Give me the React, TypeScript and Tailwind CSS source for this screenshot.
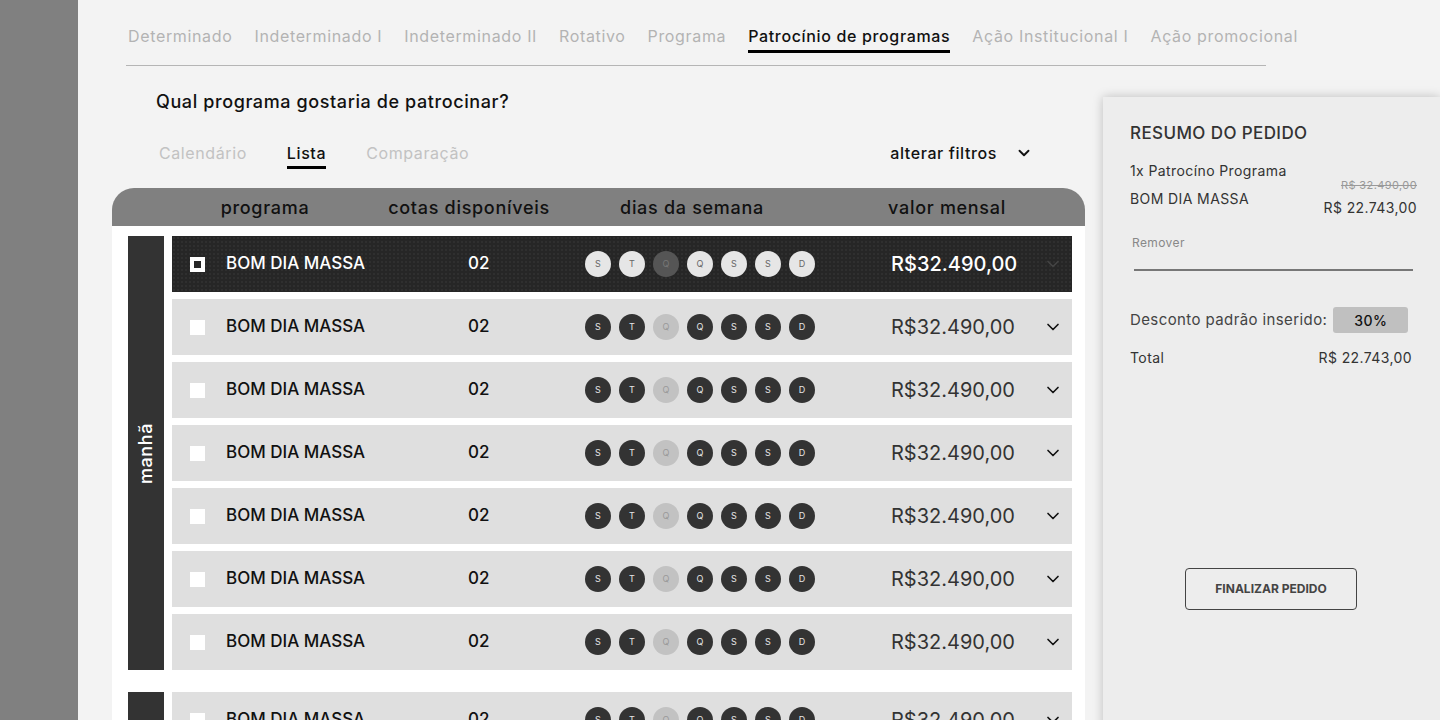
import { ChevronDown } from "lucide-react";

const tabs = [
  "Determinado",
  "Indeterminado I",
  "Indeterminado II",
  "Rotativo",
  "Programa",
  "Patrocínio de programas",
  "Ação Institucional I",
  "Ação promocional",
];

const days = ["S", "T", "Q", "Q", "S", "S", "D"];

type RowProps = { active?: boolean };

const ProgramRow = ({ active }: RowProps) => {
  return (
    <div
      className={`flex items-center h-[56px] pl-[18px] ${
        active
          ? "bg-[#262626] bg-[radial-gradient(circle,#2f2f2f_1px,transparent_1px)] bg-[length:4px_4px] text-white"
          : "bg-[#dfdfdf] text-[#111]"
      }`}
    >
      {/* checkbox */}
      <div
        className={`w-[15px] h-[15px] shrink-0 ${
          active ? "border-[4px] border-white bg-[#262626]" : "bg-white"
        }`}
      />
      <div className="ml-[21px] w-[242px] text-[17px] font-medium">BOM DIA MASSA</div>
      <div className="w-[117px] text-[17px] font-medium">02</div>

      {/* dias */}
      <div className="flex gap-[8px]">
        {days.map((d, i) => {
          const off = i === 2;
          let cls = "";
          if (active) cls = off ? "bg-[#555] text-[#777]" : "bg-[#e6e6e6] text-[#666]";
          else cls = off ? "bg-[#c2c2c2] text-[#999]" : "bg-[#333] text-[#e6e6e6]";
          return (
            <div
              key={i}
              className={`w-[26px] h-[26px] rounded-full flex items-center justify-center text-[9px] ${cls}`}
            >
              {d}
            </div>
          );
        })}
      </div>

      <div
        className={`ml-[76px] w-[155px] text-[20px] ${
          active ? "text-white font-medium" : "text-[#333]"
        }`}
      >
        R$32.490,00
      </div>
      <ChevronDown
        size={20}
        strokeWidth={2}
        className={`-ml-[3px] ${active ? "text-[#444]" : "text-[#111]"}`}
      />
    </div>
  );
};

export default function App() {
  return (
    <div className="flex h-[720px] w-[1440px] overflow-hidden bg-[#f3f3f3] font-['Inter','Noto_Sans',sans-serif]">
      {/* sidebar */}
      <div className="w-[78px] shrink-0 bg-[#808080]" />

      <div className="flex-1 flex flex-col min-w-0">
        {/* top tabs */}
        <div className="pl-[48px] pt-[24px]">
          <div className="w-[1140px] border-b border-[#b5b5b5] flex gap-[22px] pl-[2px] h-[42px]">
            {tabs.map((t) => {
              const on = t === "Patrocínio de programas";
              return (
                <div key={t} className="flex flex-col">
                  <span
                    className={`text-[16px] leading-[24px] tracking-[0.65px] whitespace-nowrap ${
                      on ? "text-[#111] font-medium" : "text-[#b3b3b3]"
                    }`}
                  >
                    {t}
                  </span>
                  {on && <div className="h-[3px] bg-black mt-[2px]" />}
                </div>
              );
            })}
          </div>
        </div>

        <div className="flex">
          {/* left column */}
          <div className="ml-[34px] w-[973px] shrink-0">
            <div className="pl-[44px] pt-[24px] text-[18px] font-medium tracking-[0.6px] text-[#111] leading-[24px]">
              Qual programa gostaria de patrocinar?
            </div>

            <div className="flex items-start pl-[47px] pt-[27px] h-[74px] tracking-[0.6px]">
              <span className="text-[16px] leading-[24px] text-[#c2c2c2]">Calendário</span>
              <div className="ml-[40px] flex flex-col">
                <span className="text-[16px] leading-[24px] text-[#111] font-medium">Lista</span>
                <div className="h-[3px] bg-black mt-[1px]" />
              </div>
              <span className="ml-[40px] text-[16px] leading-[24px] text-[#c2c2c2]">Comparação</span>
              <div className="ml-auto mr-[52px] flex items-center gap-[18px]">
                <span className="text-[16px] leading-[24px] text-[#111] font-medium">alterar filtros</span>
                <ChevronDown size={18} strokeWidth={2.5} className="text-[#111]" />
              </div>
            </div>

            {/* table */}
            <div className="rounded-t-[22px] bg-[#808080] h-[38px] flex items-center pl-[60px] text-[18px] tracking-[0.7px] text-[#111] font-medium">
              <div className="w-[186px] text-center">programa</div>
              <div className="ml-[11px] w-[200px] text-center">cotas disponíveis</div>
              <div className="ml-[23px] w-[200px] text-center">dias da semana</div>
              <div className="ml-[55px] w-[200px] text-center">valor mensal</div>
            </div>

            <div className="bg-white pl-[16px] pr-[13px] pt-[10px] flex flex-col gap-[22px]">
              <div className="flex gap-[8px]">
                <div className="w-[36px] shrink-0 bg-[#333] flex items-center justify-center">
                  <span className="-rotate-90 text-white text-[18px] font-medium tracking-[0.6px] whitespace-nowrap">manhã</span>
                </div>
                <div className="flex-1 flex flex-col gap-[7px]">
                  <ProgramRow active />
                  <ProgramRow />
                  <ProgramRow />
                  <ProgramRow />
                  <ProgramRow />
                  <ProgramRow />
                  <ProgramRow />
                </div>
              </div>
              <div className="flex gap-[8px]">
                <div className="w-[36px] shrink-0 bg-[#333]" />
                <div className="flex-1 flex flex-col gap-[7px]">
                  <ProgramRow />
                  <ProgramRow />
                </div>
              </div>
            </div>
          </div>

          {/* resumo */}
          <div className="ml-[18px] mt-[31px] flex-1 h-[700px] bg-[#ededed] shadow-[0_0_10px_rgba(0,0,0,0.22)] pl-[27px] pr-[23px] pt-[24px] text-[#333] tracking-[0.4px]">
            <div className="text-[17px] font-medium leading-[24px]">RESUMO DO PEDIDO</div>

            <div className="mt-[16px] flex justify-between">
              <div className="flex flex-col text-[14px] leading-[20px]">
                <span>1x Patrocíno Programa</span>
                <span className="mt-[8px]">BOM DIA MASSA</span>
              </div>
              <div className="flex flex-col items-end pt-[17px]">
                <span className="text-[11px] leading-[14px] text-[#999] line-through">R$ 32.490,00</span>
                <span className="text-[14px] leading-[20px] mt-[6px]">R$ 22.743,00</span>
              </div>
            </div>

            <div className="mt-[17px] pl-[2px] text-[12px] text-[#888] leading-[16px]">Remover</div>
            <div className="mt-[18px] ml-[4px] mr-[4px] h-[2px] bg-[#777]" />

            <div className="mt-[36px] flex items-center">
              <span className="text-[15px] text-[#444]">Desconto padrão inserido:</span>
              <div className="ml-[6px] w-[75px] h-[26px] rounded-[3px] bg-[#c0c0c0] flex items-center justify-center text-[14px] font-medium text-[#111]">
                30%
              </div>
            </div>

            <div className="mt-[15px] flex justify-between pr-[5px] text-[14px] leading-[20px]">
              <span>Total</span>
              <span>R$ 22.743,00</span>
            </div>

            <div className="mt-[200px] ml-[55px] w-[172px] h-[42px] rounded-[4px] border border-[#444] flex items-center justify-center text-[12px] font-bold tracking-normal text-[#444]">
              FINALIZAR PEDIDO
            </div>
          </div>
        </div>
      </div>
    </div>
  );
}
